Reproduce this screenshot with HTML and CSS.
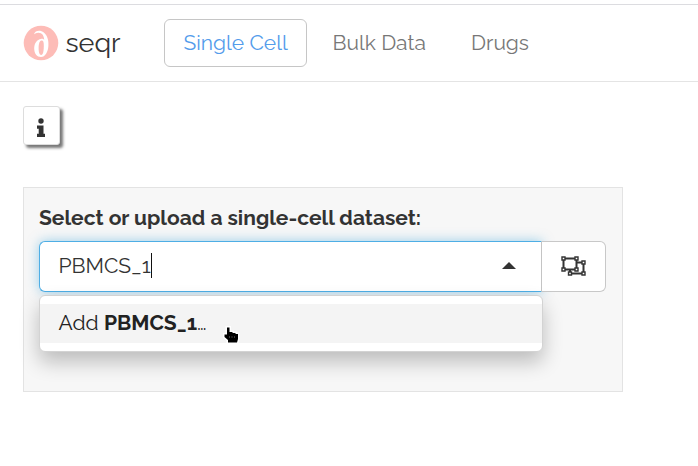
FILE: index.html
```
<!DOCTYPE html>
<html lang="en">
<head>
<meta charset="utf-8">
<title>seqr</title>
<link rel="stylesheet" href="styles.css">
</head>
<body>
<header class="navbar">
  <div class="brand">
    <svg class="logo" viewBox="0 0 36 36" aria-hidden="true">
      <circle cx="18" cy="18" r="17.300" fill="#fdbcb7"/>
      <path d="M11 9.200C12 5.500 17.300 4.700 20.800 7.500C24.400 10.400 25.800 15.200 25.400 21C25 27 22.200 32 18 32C14 32 11.200 28.500 11.200 23.500C11.200 18 14.100 14.300 18 13.900C19.800 13.700 20.700 14.400 21.200 15C21 10.800 19.400 7.800 15.400 7.700C13.400 7.600 12.500 8.700 11 9.200Z" fill="#fff"/>
      <path d="M18.300 15.600C16.500 15.900 15.600 19 15.600 23C15.600 27 16.300 30 18.200 30C20 30 20.800 26 20.800 21C20.800 17 20.300 15.300 18.300 15.600Z" fill="#fdbcb7"/>
    </svg>
    <span class="brand-name">seqr</span>
  </div>
  <nav class="tabs">
    <a class="tab active">Single Cell</a>
    <a class="tab">Bulk Data</a>
    <a class="tab">Drugs</a>
  </nav>
</header>
<main>
  <button class="info" aria-label="Info">
    <svg width="10" height="20" viewBox="0 0 10 20"><circle cx="5" cy="3" r="2.700"/><path d="M1 7.500h6.500v8.200H9V19H1v-3.300h1.700v-5H1z"/></svg>
  </button>
  <section class="panel">
    <label class="label">Select or upload a single-cell dataset:</label>
    <div class="group">
      <div class="input"><span>PBMCS_1</span><i class="caret"></i><i class="arrow"></i></div>
      <button class="addon" aria-label="Group">
        <svg width="26" height="20" viewBox="0 0 26 20" fill="none" stroke="#333">
          <path d="M3.500 2.500h13v11h-13zM17 6.500h6.500v11h-13.500v-4" stroke-width="2"/>
          <g fill="#fff" stroke-width="1.400"><path d="M2 1h3v3H2zM15 1h3v3h-3zM2 12h3v3H2zM15 12h3v3h-3zM22 5h3v3h-3zM22 16h3v3h-3zM8.500 16h3v3h-3z"/></g>
        </svg>
      </button>
      <div class="dropdown">
        <div class="option">Add <strong>PBMCS_1</strong>…</div>
      </div>
    </div>
  </section>
</main>
<svg class="pointer" width="17" height="18" viewBox="0 0 17 18" aria-hidden="true">
  <path d="M4 1.500h2.500v4.500h3v1h3v1h2.500v5l-1 3.500H5v-2.500L1.500 11V8.500H4z" fill="#000" stroke="#fff" stroke-width="3" paint-order="stroke"/>
  <path d="M6 11h1M8.500 11h1M11 11h1" stroke="#777"/>
</svg>
</body>
</html>
```
FILE: styles.css
```
* { box-sizing: border-box; }
body {
  margin: 0;
  height: 466px;
  overflow: hidden;
  padding-top: 4px;
  background: #fff;
  color: #333;
  font: 21px/30px Raleway, Lato, sans-serif;
}
.navbar {
  display: flex;
  height: 78px;
  padding: 14px 0 0 23px;
  border-top: 1px solid #dcdce0;
  border-bottom: 1px solid #e4e4e4;
}
.brand { display: flex; width: 141px; height: 48px; align-items: center; }
.logo { width: 36px; height: 36px; margin-top: -1px; }
.brand-name { margin-left: 6.5px; font-size: 27px; }
.tabs { display: flex; }
.tab {
  height: 48px;
  padding: 8px 0 0 18.5px;
  border: 1px solid transparent;
  border-radius: 6px;
  color: #777;
  white-space: nowrap;
}
.tab:nth-child(1) { width: 143px; }
.tab:nth-child(2) { width: 138px; padding-left: 24.500px; }
.tab:nth-child(3) { padding-left: 25px; }
.tab.active { border-color: #c6c6c6; color: #549ceb; }
main { padding: 24px 0 0 23px; }
button { display: flex; align-items: center; justify-content: center; padding: 0; background: #fff; }
.info {
  width: 37px;
  height: 39px;
  border: 1px solid #ddd;
  border-radius: 3px;
  box-shadow: 3px 3px 3px #777;
}
.info svg { margin: 4px 1px 0 0; fill: #333; }
.panel {
  width: 600px;
  height: 205px;
  margin-top: 42px;
  padding: 15px;
  border: 1px solid #e3e3e3;
  background: #f7f7f7;
}
.label { display: block; height: 38px; font-weight: 700; white-space: nowrap; }
.group { position: relative; display: flex; width: 567px; height: 51px; }
.input {
  position: relative;
  z-index: 1;
  display: flex;
  align-items: center;
  width: 503px;
  padding: 0 25px 2px 18.5px;
  border: 1px solid #4eaee5;
  border-right-color: #c4c4c4;
  border-radius: 6px 0 0 6px;
  background: #fff;
  box-shadow: 0 0 12px rgba(60, 165, 220, .5);
}
.caret { width: 1px; height: 25px; background: #111; }
.arrow {
  margin-left: auto;
  border: 7px solid transparent;
  border-top: 0;
  border-bottom: 7px solid #333;
}
.addon { position: relative; z-index: 1; width: 64px; border: 1px solid #c8c8c8; border-left: 0; border-radius: 0 6px 6px 0; }
.addon svg { margin: -2px 2px 0 0; }
.dropdown {
  position: absolute;
  z-index: 2;
  top: 54px;
  left: 0;
  width: 504px;
  height: 57px;
  padding: 8px 0;
  border: 1px solid #d3d3d3;
  border-radius: 6px;
  background: #fff;
  box-shadow: 0 10px 20px rgba(0, 0, 0, .24);
}
.option { height: 39px; padding: 4px 0 0 18.500px; background: #f4f4f4; color: #222; }
.pointer { position: absolute; z-index: 3; left: 223px; top: 326px; overflow: visible; }
```
